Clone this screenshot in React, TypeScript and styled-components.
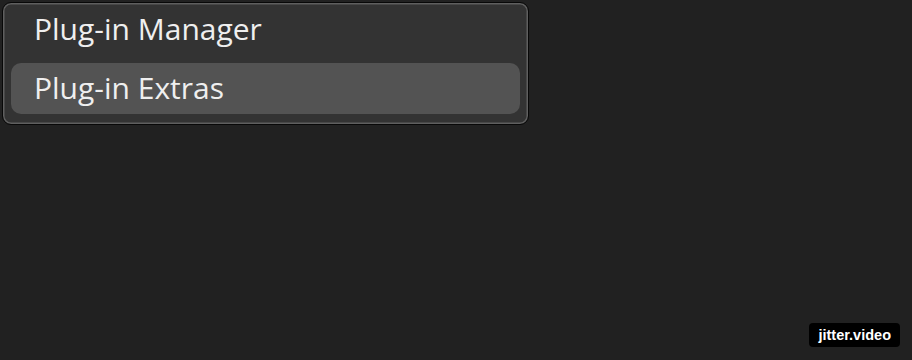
import React from 'react';
import styled, { createGlobalStyle } from 'styled-components';

const GlobalStyle = createGlobalStyle`
  html, body {
    margin: 0;
    padding: 0;
    background: #212121;
  }
  body {
    width: 912px;
    height: 360px;
    overflow: hidden;
  }
`;

const Page = styled.div`
  position: relative;
  width: 912px;
  height: 360px;
  padding: 2px;
  box-sizing: border-box;
  background: #212121;
`;

const Menu = styled.ul`
  list-style: none;
  margin: 0;
  width: 527px;
  height: 123px;
  box-sizing: border-box;
  padding: 1px 8px 9px;
  display: flex;
  flex-direction: column;
  gap: 8px;
  background: #333333;
  border: 1px solid #080808;
  border-radius: 9px;
  box-shadow: inset 0 0 0 1.5px #5f5f5f;
`;

const Item = styled.li<{ $active?: boolean }>`
  height: 51px;
  display: flex;
  align-items: center;
  padding: 0 0 1px 23px;
  box-sizing: border-box;
  border-radius: 10px;
  background: ${(p) => (p.$active ? '#535353' : 'transparent')};
  color: #efefef;
  font-family: 'Open Sans', 'Lato', sans-serif;
  font-size: 30px;
  line-height: 1;
  cursor: default;
`;

const Badge = styled.div`
  position: absolute;
  right: 12px;
  bottom: 13px;
  height: 24px;
  display: flex;
  align-items: center;
  padding: 0 9px;
  background: #000;
  color: #fff;
  border-radius: 4px;
  font-family: 'Liberation Sans', Arial, sans-serif;
  font-weight: 700;
  font-size: 14.5px;
`;

const items = [
  { label: 'Plug-in Manager', active: false },
  { label: 'Plug-in Extras', active: true },
];

const App: React.FC = () => {
  return (
    <>
      <GlobalStyle />
      <Page>
        <Menu>
          {items.map((item) => (
            <Item key={item.label} $active={item.active}>
              {item.label}
            </Item>
          ))}
        </Menu>
        <Badge>jitter.video</Badge>
      </Page>
    </>
  );
};

export default App;
